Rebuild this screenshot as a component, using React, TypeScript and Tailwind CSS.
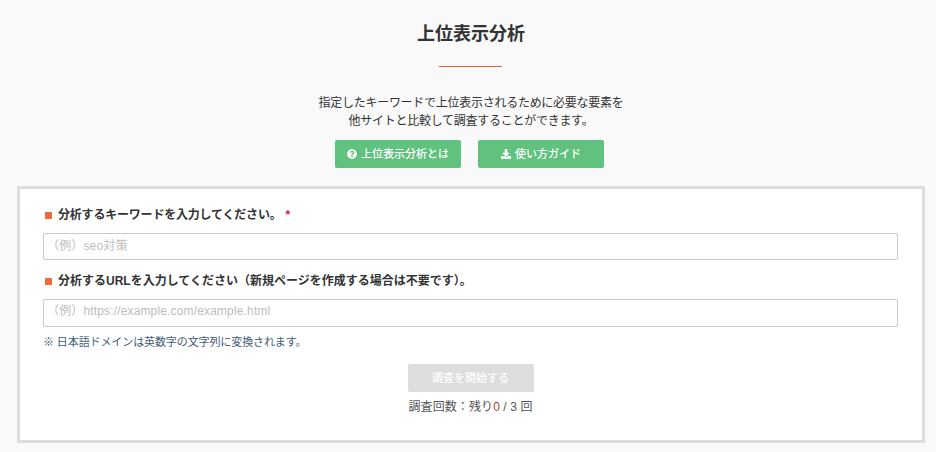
import React from "react";
import { FaQuestionCircle, FaDownload } from "react-icons/fa";

function Label({ children, className }: { children: React.ReactNode; className: string }) {
  return (
    <div className={"flex items-center h-[20px] pl-[2px] text-[12px] font-bold text-[#333] " + className}>
      <span className="w-[7px] h-[7px] bg-[#f0693a] mr-[6px] shrink-0" />
      {children}
    </div>
  );
}

export default function App() {
  return (
    <div className="w-[936px] h-[452px] bg-[#f9f9f9] overflow-hidden flex flex-col items-center pl-[6px] [font-family:'Liberation_Sans','Noto_Sans_CJK_JP',sans-serif]">
      <h1 className="mt-[21px] h-[26px] leading-[26px] text-[18px] font-bold text-[#333]">上位表示分析</h1>
      <div className="mt-[19px] mr-[1px] w-[63px] h-px bg-[#f0602f]" />
      <p className="mt-[27px] text-center text-[12px] leading-[18px] text-[#333] tracking-[-0.27px]">
        指定したキーワードで上位表示されるために必要な要素を
        <br />
        他サイトと比較して調査することができます。
      </p>
      <div className="mt-[10px] mr-[3px] flex gap-[17px]">
        <a className="w-[126px] h-[28px] rounded-[2px] bg-[#61c17f] text-white text-[11px] font-medium flex items-center justify-center gap-[4px]">
          <FaQuestionCircle className="w-[10px] h-[10px]" />
          上位表示分析とは
        </a>
        <a className="w-[126px] h-[28px] rounded-[2px] bg-[#61c17f] text-white text-[11px] font-medium flex items-center justify-center gap-[4px]">
          <FaDownload className="w-[10px] h-[10px]" />
          使い方ガイド
        </a>
      </div>
      <div className="mt-[18px] w-[908px] h-[257px] border-[3px] border-[#dddddd] bg-white pt-[16px] pl-[23px] pr-[24px]">
        <Label className="tracking-[-0.2px]">
          分析するキーワードを入力してください。
          <span className="ml-[4px] text-[#d6204e]">*</span>
        </Label>
        <input
          readOnly
          placeholder="（例）seo対策"
          className="mt-[8px] block w-full h-[27px] border border-[#c8c8c8] rounded-[2px] bg-white pl-[3px] pr-[10px] pb-[2px] text-[12px] tracking-[0.15px] placeholder:text-[#bdbdbd] outline-none"
        />
        <div className="mt-[11px]">
          <Label className="tracking-normal">分析するURLを入力してください（新規ページを作成する場合は不要です）。</Label>
        </div>
        <input
          readOnly
          placeholder="（例）https://example.com/example.html"
          className="mt-[8px] block w-full h-[28px] border border-[#c8c8c8] rounded-[2px] bg-white pl-[3px] pr-[10px] pb-[4px] text-[12px] tracking-[0.15px] placeholder:text-[#bdbdbd] outline-none"
        />
        <p className="mt-[6px] h-[18px] leading-[18px] text-[11px] tracking-[-0.1px] text-[#3f5c78]">※ 日本語ドメインは英数字の文字列に変換されます。</p>
        <div className="mt-[13px] flex flex-col items-center">
          <button className="w-[126px] h-[28px] rounded-[2px] bg-[#dddddd] text-white text-[11px] font-medium">調査を開始する</button>
          <p className="mt-[6px] h-[18px] leading-[18px] text-[12px] tracking-[0.1px] text-[#555]">
            調査回数：残り<span className="text-[#c0392b]">0</span> / 3 回
          </p>
        </div>
      </div>
    </div>
  );
}
